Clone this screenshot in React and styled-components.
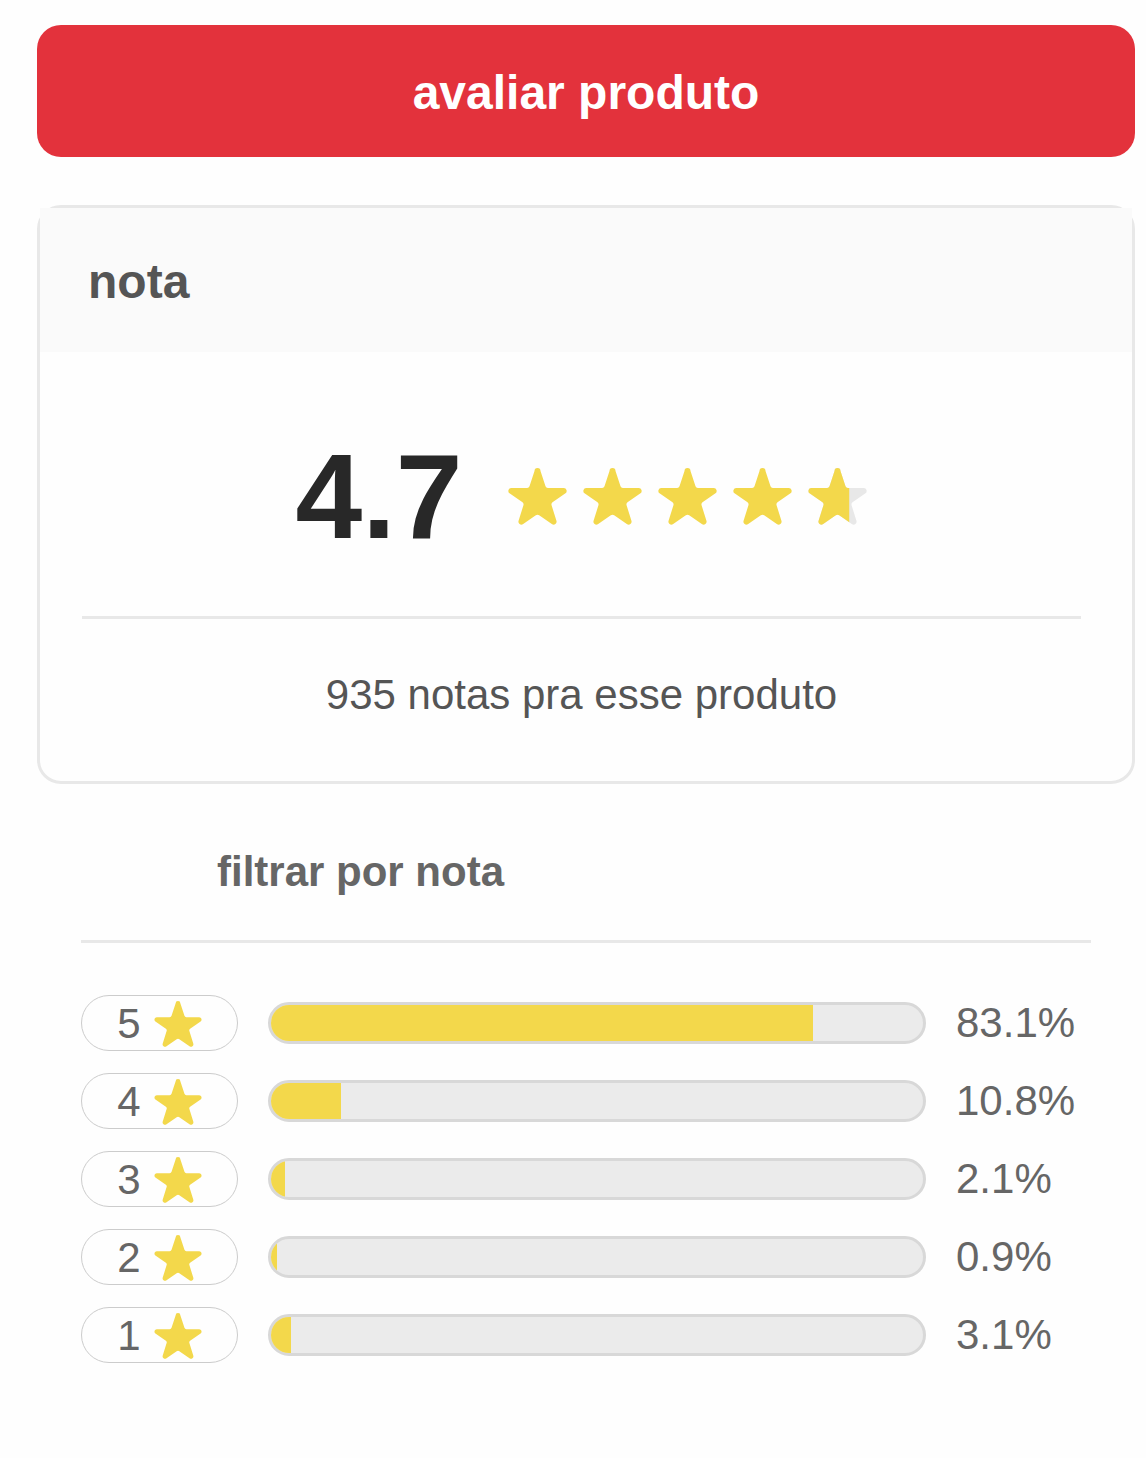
import React, { useId } from "react";
import styled, { createGlobalStyle } from "styled-components";

const GlobalStyle = createGlobalStyle`
  *, *::before, *::after { box-sizing: border-box; }
  body {
    margin: 0;
    background: #fefefe;
    color: #666;
    font-family: "Liberation Sans", Helvetica, Arial, sans-serif;
    font-size: 42px;
    line-height: 48px;
  }
  button { font: inherit; color: inherit; cursor: pointer; }
`;

const Page = styled.main`
  display: flex;
  flex-direction: column;
  padding: 25px 11px 48px 37px;
`;

const ReviewButton = styled.button`
  padding: 40px 24px 36px;
  border: 0;
  border-radius: 24px;
  background: #e3323c;
  color: #fff;
  font-size: 48px;
  font-weight: 700;
  line-height: 56px;
`;

const Card = styled.section`
  margin-top: 48px;
  border: 3px solid #e8e8e8;
  border-radius: 24px;
  background: #fefefe;
`;

const CardTitle = styled.h2`
  margin: 0;
  padding: 50px 48px 46px;
  background: #fafafa;
  color: #555;
  font-size: 48px;
  line-height: 48px;
`;

const CardBody = styled.div`
  padding: 72px 51px 62px 42px;
`;

const Score = styled.div`
  display: flex;
  align-items: center;
  justify-content: center;
  gap: 46px;
  padding-bottom: 48px;
  border-bottom: 3px solid #e8e8e8;
`;

const ScoreValue = styled.strong`
  color: #282828;
  font-size: 120px;
  line-height: 144px;
`;

const Stars = styled.div`
  display: flex;
  gap: 16px;
`;

const StarSvg = styled.svg`
  display: block;
  flex: none;
  width: ${(p) => (p.$small ? 48 : 59)}px;
  height: ${(p) => (p.$small ? 46 : 57)}px;
`;

const Total = styled.p`
  margin: 52px 0 0;
  color: #555;
  text-align: center;
`;

const Filter = styled.section`
  padding: 64px 44px 0;
`;

const FilterTitle = styled.h3`
  margin: 0;
  padding: 0 0 44px 136px;
  border-bottom: 3px solid #e8e8e8;
  font-size: 42px;
`;

const RowList = styled.ul`
  display: flex;
  flex-direction: column;
  gap: 22px;
  margin: 52px 0 0;
  padding: 0;
  list-style: none;
`;

const Row = styled.li`
  display: flex;
  align-items: center;
  gap: 30px;
`;

const Pill = styled.button`
  display: flex;
  align-items: center;
  justify-content: center;
  gap: 13px;
  width: 157px;
  height: 56px;
  padding: 2px 0 0;
  border: 1px solid #ccc;
  border-radius: 28px;
  background: #fefefe;
`;

const Track = styled.div`
  flex: 1;
  height: 42px;
  overflow: hidden;
  border: 3px solid #d8d8d8;
  border-radius: 21px;
  background: #ebebeb;
`;

const Fill = styled.div`
  height: 100%;
  background: #f3d84b;
`;

const Percent = styled.span`
  width: 135px;
`;

const STAR_PATH =
  "M79 7 L64 53 Q62 58 57 58 H9 A9 9 0 0 0 4 74 L43 101 Q47 104 46 109 L31 157 A9 9 0 0 0 44 167 L83 140 Q88 137 93 140 L132 167 A9 9 0 0 0 145 157 L130 109 Q129 104 133 101 L172 74 A9 9 0 0 0 167 58 H119 Q114 58 112 53 L97 7 A9 9 0 0 0 79 7 Z";

function Star({ small, fill = 1 }) {
  const clipId = useId();
  return (
    <StarSvg $small={small} viewBox="0 -2 176 171" aria-hidden="true">
      {fill < 1 && (
        <>
          <clipPath id={clipId}>
            <rect y="-2" width={176 * fill} height="171" />
          </clipPath>
          <path d={STAR_PATH} fill="#e8e8e8" />
        </>
      )}
      <path
        d={STAR_PATH}
        fill="#f3d84b"
        clipPath={fill < 1 ? `url(#${clipId})` : undefined}
      />
    </StarSvg>
  );
}

const distribution = [
  { stars: 5, percent: 83.1 },
  { stars: 4, percent: 10.8 },
  { stars: 3, percent: 2.1 },
  { stars: 2, percent: 0.9 },
  { stars: 1, percent: 3.1 },
];

export default function App() {
  return (
    <>
      <GlobalStyle />
      <Page>
        <ReviewButton type="button">avaliar produto</ReviewButton>
        <Card>
          <CardTitle>nota</CardTitle>
          <CardBody>
            <Score>
              <ScoreValue>4.7</ScoreValue>
              <Stars>
                {[1, 1, 1, 1, 0.7].map((fill, i) => (
                  <Star key={i} fill={fill} />
                ))}
              </Stars>
            </Score>
            <Total>935 notas pra esse produto</Total>
          </CardBody>
        </Card>
        <Filter>
          <FilterTitle>filtrar por nota</FilterTitle>
          <RowList>
            {distribution.map(({ stars, percent }) => (
              <Row key={stars}>
                <Pill type="button">
                  {stars}
                  <Star small />
                </Pill>
                <Track>
                  <Fill style={{ width: `${percent}%` }} />
                </Track>
                <Percent>{percent}%</Percent>
              </Row>
            ))}
          </RowList>
        </Filter>
      </Page>
    </>
  );
}
